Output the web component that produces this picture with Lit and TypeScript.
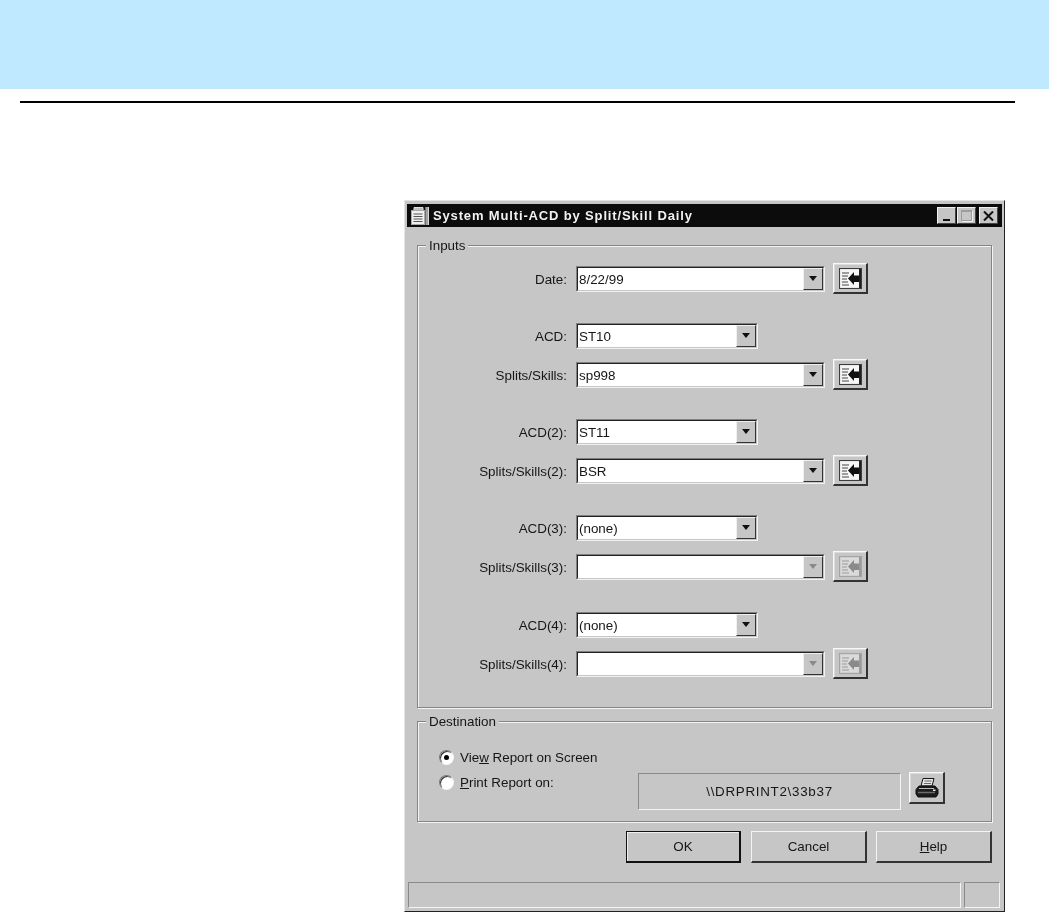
import { LitElement, html, css, svg } from "lit";
import { customElement } from "lit/decorators.js";

const pickIcon = (off: boolean) => html`<svg class="pick" width="23" height="21" viewBox="0 0 23 21">
  <rect x="0.5" y="0.5" width="22" height="20" fill="${off ? "#cfcfcf" : "#e8e8e8"}" stroke="${off ? "#a4a4a4" : "#3c3c3c"}"/>
  <rect x="2" y="2" width="18" height="17" fill="${off ? "#dadada" : "#f6f6f6"}"/>
  <path d="M3 5h7M3 8h6M3 11h5M3 14h6M3 17h7" stroke="${off ? "#b0b0b0" : "#808080"}" stroke-width="1.500" fill="none"/>
  <path d="M9 10.500 L15 4 V7.500 H21 V14 H15 V17 Z" fill="${off ? "#8a8a8a" : "#101010"}"/>
  <rect x="20" y="1" width="2" height="19" fill="${off ? "#9a9a9a" : "#202020"}"/>
</svg>`;

const printerIcon = svg`<svg width="24" height="22" viewBox="0 0 24 22">
  <path d="M8 1.500 H19 L17 9 H6 Z" fill="#e6e6e6" stroke="#111"/>
  <path d="M9.500 4h7M9 6.500h7" stroke="#666"/>
  <path d="M4 9 H20 L23 12.500 V17 L21 20 H3 L1 17 V12.500 Z" fill="#1c1c1c" stroke="#111"/>
  <path d="M4 11.500 H19" stroke="#b8b8b8"/>
  <path d="M3 15.500 H20" stroke="#6c6c6c" stroke-width="1.500"/>
  <rect x="18" y="12.500" width="2.500" height="1.500" fill="#eee"/>
</svg>`;

const docIcon = svg`<svg width="20" height="20" viewBox="0 0 20 20">
  <path d="M4 4 V1.500 H13 V4" fill="#bdbdbd" stroke="#e0e0e0"/>
  <rect x="1.500" y="4.500" width="13" height="14" fill="#f0f0f0" stroke="#a8a8a8"/>
  <path d="M3.500 8h9M3.500 10.500h9M3.500 13h9M3.500 15.500h9" stroke="#555"/>
  <rect x="15.500" y="1" width="3.500" height="18" fill="#d8d8d8"/>
  <rect x="16.500" y="1" width="1" height="18" fill="#6a6a6a"/>
</svg>`;

@customElement("app-root")
export class AppRoot extends LitElement {
  static styles = css`
    :host { display: block; background: #fff; height: 913px; overflow: hidden; font-family: "Liberation Sans", Arial, sans-serif; font-size: 13.400px; color: #161616; }
    * { box-sizing: border-box; }
    .band { height: 89px; background: #bfe9ff; }
    .rule { height: 2px; margin: 12px 34px 0 20px; background: #000; }
    .win {
      width: 601px; height: 712px; margin: 97px 0 0 404px; padding: 3px 2px 3px 2px;
      background: #c6c6c6; border: 1px solid; border-color: #e4e4e4 #222 #222 #e4e4e4;
      display: flex; flex-direction: column; filter: blur(0.35px);
    }
    .title { height: 23px; flex: none; background: #0c0c0c; display: flex; align-items: center; padding: 0 4px 0 3px; color: #f2f2f2; font-weight: bold; font-size: 13px; letter-spacing: 0.850px; }
    .title svg { flex: none; margin-right: 3px; }
    .title .t { flex: 1; }
    .wb { width: 19px; height: 17px; background: #c6c6c6; border: 1px solid; border-color: #f0f0f0 #444 #444 #f0f0f0; display: flex; align-items: center; justify-content: center; }
    .wb + .wb { margin-left: 1px; }
    .wb.x { margin-left: 3px; }
    .wb svg { margin: 0; }
    .wb .min { width: 7px; height: 2px; background: #111; margin-top: 8px; }
    .wb .max { width: 11px; height: 11px; border: 1px solid #9c9c9c; border-top-width: 2px; box-shadow: 1px 1px 0 #eee; }
    .body { flex: 1; display: flex; flex-direction: column; padding: 18px 10px 0; min-height: 0; }
    .group { border: 1px solid #858585; box-shadow: 1px 1px 0 #f4f4f4, inset 1px 1px 0 #f4f4f4; }
    .legend { display: block; width: max-content; margin: -7px 0 0 8px; padding: 0 3px; background: #c6c6c6; line-height: 14px; height: 14px; }
    .inputs { height: 463px; }
    .rows { display: flex; flex-direction: column; gap: 8px; padding-top: 10px; }
    .row { height: 31px; display: grid; grid-template-columns: 150px auto auto; column-gap: 8px; align-items: center; justify-content: start; }
    .row.sp { margin-top: 18px; }
    .row.sp2 { margin-top: 19px; }
    .lab { text-align: right; padding-top: 1px; margin-right: 1px; }
    .combo { height: 26px; background: #fff; border: 1px solid; border-color: #808080 #f2f2f2 #f2f2f2 #808080; display: block; }
    .combo .in { height: 24px; border: 1px solid; border-color: #222 #c6c6c6 #c6c6c6 #222; display: flex; align-items: center; justify-content: space-between; padding-left: 1px; }
    .combo .in span { padding-top: 1px; }
    .combo.w { width: 249px; }
    .combo.n { width: 182px; }
    .ar { width: 20px; height: 22px; background: #c6c6c6; border: 1px solid; border-color: #f0f0f0 #333 #333 #f0f0f0; display: flex; align-items: center; justify-content: center; flex: none; }
    .ar i { width: 0; height: 0; border: 4px solid transparent; border-top: 5px solid #111; border-bottom: 0; display: block; }
    .ar.off i { border-top-color: #8a8a8a; }
    .pbtn { width: 35px; height: 31px; background: #c6c6c6; border: 1px solid; border-color: #f8f8f8 #333 #333 #f8f8f8; border-width: 1px 2px 2px 1px; box-shadow: inset 1px 1px 0 #dcdcdc; display: flex; align-items: center; justify-content: center; }
    .dest { height: 101px; margin-top: 13px; }
    .drow { padding: 0 0 0 21px; display: flex; align-items: center; gap: 6px; }
    .d1 { margin-top: 20px; height: 16px; }
    .d2 { margin-top: 2px; align-items: flex-start; height: 43px; }
    .rlab { line-height: 16px; margin-top: 8px; width: 172px; }
    .rad { width: 15px; height: 15px; border-radius: 50%; flex: none; background: #fff; border: 1px solid #777; border-right-color: #f4f4f4; border-bottom-color: #f4f4f4; box-shadow: inset 1px 1px 0 #333; display: flex; align-items: center; justify-content: center; }
    .rad b { width: 5px; height: 5px; border-radius: 50%; background: #000; display: block; }
    .d2 .rad { margin-top: 8px; }
    .pfield { width: 263px; height: 37px; margin-top: 6px; border: 1px solid; border-color: #8a8a8a #f4f4f4 #f4f4f4 #8a8a8a; display: flex; align-items: center; justify-content: center; letter-spacing: 0.700px; }
    .prbtn { width: 36px; height: 32px; margin: 5px 0 0 2px; background: #c6c6c6; border: 1px solid; border-color: #f8f8f8 #333 #333 #f8f8f8; border-width: 1px 2px 2px 1px; box-shadow: inset 1px 1px 0 #dcdcdc; display: flex; align-items: center; justify-content: center; }
    u { text-decoration: underline; text-underline-offset: 1px; }
    .btns { display: flex; justify-content: flex-end; gap: 9px; margin-top: 9px; }
    .btn { width: 116px; height: 32px; background: #c6c6c6; border: 1px solid; border-color: #f4f4f4 #333 #333 #f4f4f4; border-width: 1px 2px 2px 1px; display: flex; align-items: center; justify-content: center; }
    .btn.def { border-color: #111; width: 115px; margin-right: 1px; box-shadow: inset 1px 1px 0 #f0f0f0; }
    .status { margin-top: auto; height: 26px; display: flex; gap: 3px; padding: 0 2px 0 1px; flex: none; }
    .st { border: 1px solid; border-color: #8a8a8a #f4f4f4 #f4f4f4 #8a8a8a; height: 26px; }
    .st.a { flex: 1; }
    .st.b { width: 36px; }
  `;

  private combo(value: string, wide: boolean, off = false) {
    return html`<div class="combo ${wide ? "w" : "n"}"><div class="in"><span>${value}</span><div class="ar ${off ? "off" : ""}"><i></i></div></div></div>`;
  }

  private row(label: string, value: string, wide: boolean, opts: { off?: boolean; pick?: boolean; sp?: string } = {}) {
    return html`<div class="row ${opts.sp ?? ""}">
      <div class="lab">${label}</div>
      ${this.combo(value, wide, opts.off)}
      ${opts.pick ? html`<div class="pbtn">${pickIcon(!!opts.off)}</div>` : ""}
    </div>`;
  }

  render() {
    return html`
      <div class="band"></div>
      <div class="rule"></div>
      <div class="win">
        <div class="title">
          ${docIcon}
          <span class="t">System Multi-ACD by Split/Skill Daily</span>
          <div class="wb"><div class="min"></div></div>
          <div class="wb"><div class="max"></div></div>
          <div class="wb x"><svg width="11" height="10" viewBox="0 0 11 10"><path d="M1 0.500 L10 9.500 M10 0.500 L1 9.500" stroke="#111" stroke-width="2"/></svg></div>
        </div>
        <div class="body">
          <div class="group inputs">
            <span class="legend">Inputs</span>
            <div class="rows">
              ${this.row("Date:", "8/22/99", true, { pick: true })}
              ${this.row("ACD:", "ST10", false, { sp: "sp" })}
              ${this.row("Splits/Skills:", "sp998", true, { pick: true })}
              ${this.row("ACD(2):", "ST11", false, { sp: "sp" })}
              ${this.row("Splits/Skills(2):", "BSR", true, { pick: true })}
              ${this.row("ACD(3):", "(none)", false, { sp: "sp" })}
              ${this.row("Splits/Skills(3):", "", true, { pick: true, off: true })}
              ${this.row("ACD(4):", "(none)", false, { sp: "sp2" })}
              ${this.row("Splits/Skills(4):", "", true, { pick: true, off: true })}
            </div>
          </div>
          <div class="group dest">
            <span class="legend">Destination</span>
            <div class="drow d1"><div class="rad"><b></b></div><span>Vie<u>w</u> Report on Screen</span></div>
            <div class="drow d2">
              <div class="rad"></div>
              <span class="rlab"><u>P</u>rint Report on:</span>
              <div class="pfield">\\\\DRPRINT2\\33b37</div>
              <div class="prbtn">${printerIcon}</div>
            </div>
          </div>
          <div class="btns">
            <div class="btn def">OK</div>
            <div class="btn">Cancel</div>
            <div class="btn"><span><u>H</u>elp</span></div>
          </div>
        </div>
        <div class="status"><div class="st a"></div><div class="st b"></div></div>
      </div>
    `;
  }
}
